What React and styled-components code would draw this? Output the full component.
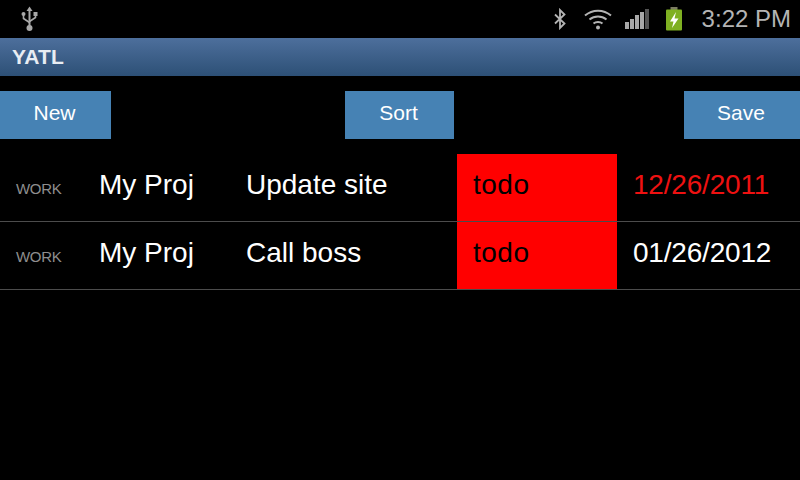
import React from "react";
import styled, { createGlobalStyle } from "styled-components";

const GlobalStyle = createGlobalStyle`
  html, body {
    margin: 0;
    padding: 0;
    background: #000;
  }
  body {
    font-family: "Liberation Sans", Arial, sans-serif;
  }
`;

const Screen = styled.div`
  width: 800px;
  height: 480px;
  background: #000;
  overflow: hidden;
`;

const StatusBar = styled.div`
  height: 38px;
  display: flex;
  align-items: center;
  padding: 0 9px 0 20px;
  background: #000;
`;

const StatusIcons = styled.div`
  margin-left: auto;
  display: flex;
  align-items: center;
`;

const Clock = styled.span`
  margin-left: 19px;
  color: #b4b4b4;
  font-size: 24px;
  line-height: 38px;
`;

const TitleBar = styled.div`
  height: 38px;
  box-sizing: border-box;
  padding-left: 12px;
  display: flex;
  align-items: center;
  color: #e8edf3;
  font-size: 21px;
  font-weight: bold;
  letter-spacing: 0.2px;
  background: linear-gradient(#4d6f9c, #2d5076);
`;

const Toolbar = styled.div`
  display: flex;
  padding: 15px 0;
`;

const Button = styled.button`
  width: ${({ $width }) => $width}px;
  height: 48px;
  margin-left: ${({ $gap }) => $gap || 0}px;
  padding: 0 2px 5px 0;
  border: 0;
  background: #4682b4;
  color: #fff;
  font-family: inherit;
  font-size: 21px;
`;

const Row = styled.div`
  height: 68px;
  box-sizing: border-box;
  display: grid;
  grid-template-columns: 99px 147px 211px 160px 183px;
  border-bottom: 1px solid #4c4c4c;
  color: #fff;
  font-size: 28px;
`;

const Cell = styled.div`
  display: flex;
  align-items: center;
  padding-bottom: 5px;
  white-space: nowrap;
`;

const Category = styled(Cell)`
  padding: 1px 0 0 16px;
  color: #8e8e8e;
  font-size: 15px;
  letter-spacing: -0.3px;
`;

const Status = styled(Cell)`
  padding-left: 16px;
  background: #f00;
  color: #000;
  letter-spacing: 0.5px;
`;

const DateCell = styled(Cell)`
  padding-left: 16px;
  color: ${({ $overdue }) => ($overdue ? "#ee1111" : "#fff")};
  letter-spacing: -0.2px;
`;

const UsbIcon = () => (
  <svg width="19" height="26" viewBox="0 0 19 26">
    <g fill="none" stroke="#a8a8a8" strokeWidth="1.6">
      <path d="M9.5 4v18" strokeWidth="2" />
      <path d="M3.5 9v3.5l6 4" />
      <path d="M15.5 8v3.5l-6 4" />
    </g>
    <g fill="#a8a8a8">
      <path d="M9.5 0.5 12.5 5h-6z" />
      <circle cx="3.5" cy="8" r="2" />
      <rect x="13.5" y="6" width="4" height="4" />
      <circle cx="9.5" cy="22" r="3" />
    </g>
  </svg>
);

const BluetoothIcon = () => (
  <svg width="14" height="22" viewBox="0 0 14 22">
    <path
      d="M2 6.5 11.5 15.5 7 20V2l4.500 4.500L2 15.500"
      fill="none"
      stroke="#b4b4b4"
      strokeWidth="1.8"
    />
  </svg>
);

const WifiIcon = () => (
  <svg width="28" height="22" viewBox="0 0 28 22">
    <g fill="none" stroke="#b4b4b4" strokeWidth="2">
      <path d="M1 7.500C8.500 1 19.500 1 27 7.500" />
      <path d="M5.500 11.500C10.500 7.500 17.500 7.500 22.500 11.500" />
      <path d="M9.500 15.500C12 13.500 16 13.500 18.500 15.500" />
    </g>
    <circle cx="14" cy="19.500" r="2" fill="#b4b4b4" />
  </svg>
);

const SignalIcon = () => (
  <svg width="24" height="22" viewBox="0 0 24 22">
    <rect x="0" y="14" width="4" height="7" fill="#a8a8a8" />
    <rect x="5" y="11" width="4" height="10" fill="#a8a8a8" />
    <rect x="10" y="7" width="4" height="14" fill="#a8a8a8" />
    <rect x="15" y="4" width="4" height="17" fill="#a8a8a8" />
    <rect x="20" y="1" width="4" height="20" fill="#555" />
  </svg>
);

const BatteryIcon = () => (
  <svg width="18" height="24" viewBox="0 0 18 24">
    <rect x="5.500" y="0" width="7" height="3" fill="#7c7c62" />
    <rect x="1" y="2.500" width="16" height="21" rx="1" fill="#7fb022" />
    <path d="M11 5 5 14.500h3.500L7 21l6.500-9.500H9.500z" fill="#fff" />
  </svg>
);

const StatusSlot = styled.span`
  display: flex;
  margin-left: ${({ $gap }) => $gap}px;
`;

const tasks = [
  { project: "My Proj", title: "Update site", date: "12/26/2011", overdue: true },
  { project: "My Proj", title: "Call boss", date: "01/26/2012" },
];

export default function App() {
  return (
    <Screen>
      <GlobalStyle />
      <StatusBar>
        <UsbIcon />
        <StatusIcons>
          <StatusSlot $gap={0}><BluetoothIcon /></StatusSlot>
          <StatusSlot $gap={17}><WifiIcon /></StatusSlot>
          <StatusSlot $gap={13}><SignalIcon /></StatusSlot>
          <StatusSlot $gap={16}><BatteryIcon /></StatusSlot>
          <Clock>3:22 PM</Clock>
        </StatusIcons>
      </StatusBar>
      <TitleBar>YATL</TitleBar>
      <Toolbar>
        <Button $width={111}>New</Button>
        <Button $width={109} $gap={234}>Sort</Button>
        <Button $width={116} $gap={230}>Save</Button>
      </Toolbar>
      {tasks.map((task) => (
        <Row key={task.title}>
          <Category>WORK</Category>
          <Cell>{task.project}</Cell>
          <Cell>{task.title}</Cell>
          <Status>todo</Status>
          <DateCell $overdue={task.overdue}>{task.date}</DateCell>
        </Row>
      ))}
    </Screen>
  );
}
